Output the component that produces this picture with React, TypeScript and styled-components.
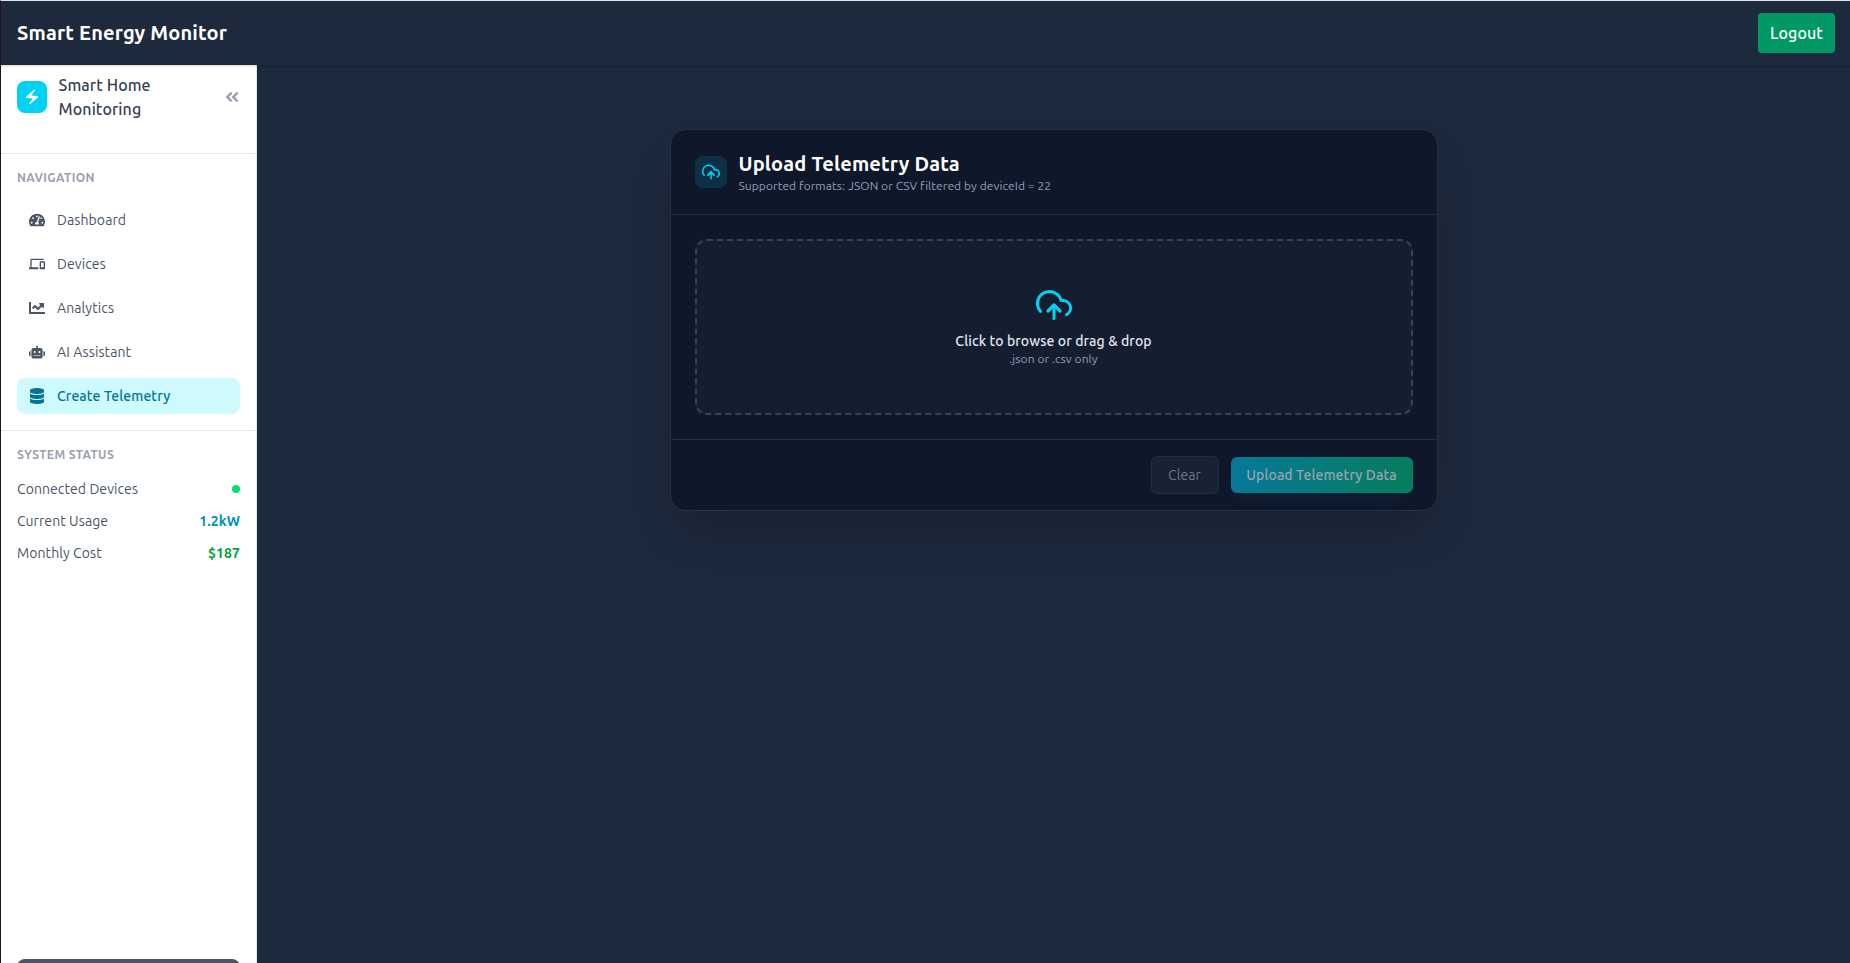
import React from "react";
import styled, { createGlobalStyle } from "styled-components";
import { FaTachometerAlt, FaChartLine, FaRobot, FaDatabase, FaAngleDoubleLeft } from "react-icons/fa";
import { MdDevices, MdElectricBolt } from "react-icons/md";
import { FiUploadCloud } from "react-icons/fi";

const GlobalStyle = createGlobalStyle`
  *, *::before, *::after { box-sizing: border-box; }
  body {
    margin: 0;
    height: 963px;
    overflow: hidden;
    background: #1d293d;
    font-family: Ubuntu, "Noto Sans", "Open Sans", sans-serif;
  }
  button { font-family: inherit; }
`;

const Window = styled.div`
  display: flex;
  flex-direction: column;
  height: 963px;
  overflow: hidden;
  border-left: 1px solid #240f1e;
  border-top: 1px solid #dfe5e3;
  background: #1d293d;
`;

const TopBar = styled.header`
  flex: none;
  display: flex;
  align-items: center;
  justify-content: space-between;
  height: 64px;
  padding: 0 15px 0 16px;
  background: #1d293d;
  color: #fff;
  box-shadow: 0 1px 3px rgba(0, 0, 0, 0.1), 0 1px 2px rgba(0, 0, 0, 0.1);
  z-index: 1;
`;

const Brand = styled.h1`
  margin: 0;
  font-size: 20px;
  line-height: 28px;
  font-weight: 700;
  letter-spacing: 0.17px;
`;

const LogoutButton = styled.button`
  width: 77px;
  height: 40px;
  padding: 0;
  border: 0;
  border-radius: 4px;
  background: #009966;
  color: #fff;
  font-size: 16px;
  font-weight: 500;
  letter-spacing: 0.1px;
`;

const Layout = styled.div`
  flex: 1;
  min-height: 0;
  display: flex;
`;

const Sidebar = styled.aside`
  flex: none;
  display: flex;
  flex-direction: column;
  width: 256px;
  background: #fff;
  border-right: 1px solid #e5e7eb;
  color: #4a5565;
`;

const SidebarHeader = styled.div`
  display: flex;
  align-items: flex-start;
  height: 89px;
  padding: 8px 16px 0;
  border-bottom: 1px solid #e5e7eb;
`;

const Logo = styled.div`
  display: flex;
  align-items: center;
  justify-content: center;
  width: 29.6px;
  height: 32px;
  margin: 8px 12px 0 0;
  border-radius: 8px;
  background: #00d3f2;
  color: #fff;
`;

const ProductName = styled.div`
  flex: 1;
  display: flex;
  flex-direction: column;
  font-size: 16px;
  line-height: 24px;
  font-weight: 500;
  letter-spacing: 0.1px;
  color: #364153;
`;

const Collapse = styled.div`
  display: flex;
  margin: 16px 0 0;
  color: #99a1af;
`;

const Section = styled.section<{ $divided?: boolean }>`
  padding: 16px;
  border-bottom: ${(p) => (p.$divided ? "1px solid #e5e7eb" : "0")};
`;

const SectionTitle = styled.h2`
  margin: 0 0 16px;
  font-size: 12px;
  line-height: 16px;
  font-weight: 700;
  letter-spacing: 0.42px;
  color: #99a1af;
`;

const NavList = styled.nav`
  display: flex;
  flex-direction: column;
  gap: 8px;
`;

const NavItem = styled.a<{ $active?: boolean }>`
  display: flex;
  align-items: center;
  gap: 12px;
  height: 36px;
  padding: 0 12px;
  border-radius: 8px;
  font-size: 14px;
  line-height: 20px;
  letter-spacing: 0.1px;
  font-weight: ${(p) => (p.$active ? 500 : 400)};
  background: ${(p) => (p.$active ? "#cefafe" : "transparent")};
  color: ${(p) => (p.$active ? "#007595" : "#4a5565")};
`;

const StatusList = styled.div`
  display: flex;
  flex-direction: column;
  gap: 12px;
  font-size: 14px;
  line-height: 20px;
  letter-spacing: 0.08px;
`;

const StatusRow = styled.div`
  display: flex;
  align-items: center;
  justify-content: space-between;
`;

const StatusDot = styled.i`
  width: 8px;
  height: 8px;
  border-radius: 50%;
  background: #05df72;
`;

const StatusValue = styled.b<{ $color: string }>`
  font-weight: 700;
  color: ${(p) => p.$color};
`;

const SidebarAction = styled.div`
  flex: none;
  height: 40px;
  margin: auto 16px -36px;
  border-radius: 8px;
  background: #4a5565;
`;

const Main = styled.main`
  flex: 1;
  display: flex;
  flex-direction: column;
  align-items: center;
  padding-top: 64px;
`;

const Card = styled.section`
  width: 768px;
  border: 1px solid #243145;
  border-radius: 16px;
  background: #0f172a;
  box-shadow: 0 25px 50px -12px rgba(0, 0, 0, 0.25);
`;

const CardHeader = styled.div`
  display: flex;
  align-items: center;
  gap: 12px;
  padding: 20px 24px;
  border-bottom: 1px solid #243145;
`;

const IconTile = styled.div`
  display: flex;
  align-items: center;
  justify-content: center;
  width: 32px;
  height: 32px;
  border-radius: 8px;
  background: #0d3047;
  color: #00d3f2;
`;

const CardTitle = styled.h2`
  margin: 0;
  font-size: 20px;
  line-height: 28px;
  font-weight: 700;
  letter-spacing: 0.18px;
  color: #fff;
`;

const Hint = styled.div`
  font-size: 12px;
  line-height: 16px;
  letter-spacing: 0.07px;
  color: #90a1b9;
`;

const CardBody = styled.div`
  padding: 24px;
`;

const DropZone = styled.div`
  display: flex;
  flex-direction: column;
  align-items: center;
  justify-content: center;
  height: 176px;
  border: 2px dashed #364357;
  border-radius: 12px;
  background: #151d31;
  color: #00d3f2;
`;

const DropTitle = styled.div`
  margin-top: 8px;
  font-size: 14px;
  line-height: 20px;
  font-weight: 500;
  letter-spacing: 0.09px;
  color: #e2e8f0;
`;

const CardFooter = styled.div`
  display: flex;
  align-items: center;
  justify-content: flex-end;
  gap: 12px;
  height: 71px;
  padding: 0 24px;
  border-top: 1px solid #243145;
`;

const ClearButton = styled.button`
  width: 68px;
  height: 38px;
  padding: 0;
  border: 1px solid #232e41;
  border-radius: 6px;
  background: #182235;
  color: #6d7789;
  font-size: 14px;
  letter-spacing: 0.08px;
`;

const UploadButton = styled.button`
  width: 182px;
  height: 36px;
  padding: 0;
  border: 0;
  border-radius: 6px;
  background: linear-gradient(to right, #077898, #067d5c);
  box-shadow: 0 10px 15px -3px rgba(0, 184, 219, 0.06);
  color: #9ba5ad;
  font-size: 14px;
  font-weight: 500;
  letter-spacing: 0.1px;
`;

const navItems = [
  { label: "Dashboard", icon: FaTachometerAlt },
  { label: "Devices", icon: MdDevices },
  { label: "Analytics", icon: FaChartLine },
  { label: "AI Assistant", icon: FaRobot },
  { label: "Create Telemetry", icon: FaDatabase, active: true },
];

export default function App() {
  return (
    <>
      <GlobalStyle />
      <Window>
        <TopBar>
          <Brand>Smart Energy Monitor</Brand>
          <LogoutButton>Logout</LogoutButton>
        </TopBar>
        <Layout>
          <Sidebar>
            <SidebarHeader>
              <Logo><MdElectricBolt size={18} /></Logo>
              <ProductName>
                <span>Smart Home</span>
                <span>Monitoring</span>
              </ProductName>
              <Collapse><FaAngleDoubleLeft size={16} /></Collapse>
            </SidebarHeader>
            <Section $divided>
              <SectionTitle>NAVIGATION</SectionTitle>
              <NavList>
                {navItems.map(({ label, icon: Icon, active }) => (
                  <NavItem key={label} $active={active}>
                    <Icon size={16} />
                    <span>{label}</span>
                  </NavItem>
                ))}
              </NavList>
            </Section>
            <Section>
              <SectionTitle>SYSTEM STATUS</SectionTitle>
              <StatusList>
                <StatusRow><span>Connected Devices</span><StatusDot /></StatusRow>
                <StatusRow><span>Current Usage</span><StatusValue $color="#0092b8">1.2kW</StatusValue></StatusRow>
                <StatusRow><span>Monthly Cost</span><StatusValue $color="#00a63e">$187</StatusValue></StatusRow>
              </StatusList>
            </Section>
            <SidebarAction />
          </Sidebar>
          <Main>
            <Card>
              <CardHeader>
                <IconTile><FiUploadCloud size={18} /></IconTile>
                <div>
                  <CardTitle>Upload Telemetry Data</CardTitle>
                  <Hint>Supported formats: JSON or CSV filtered by deviceId = 22</Hint>
                </div>
              </CardHeader>
              <CardBody>
                <DropZone>
                  <FiUploadCloud size={36} />
                  <DropTitle>Click to browse or drag &amp; drop</DropTitle>
                  <Hint>.json or .csv only</Hint>
                </DropZone>
              </CardBody>
              <CardFooter>
                <ClearButton>Clear</ClearButton>
                <UploadButton>Upload Telemetry Data</UploadButton>
              </CardFooter>
            </Card>
          </Main>
        </Layout>
      </Window>
    </>
  );
}
